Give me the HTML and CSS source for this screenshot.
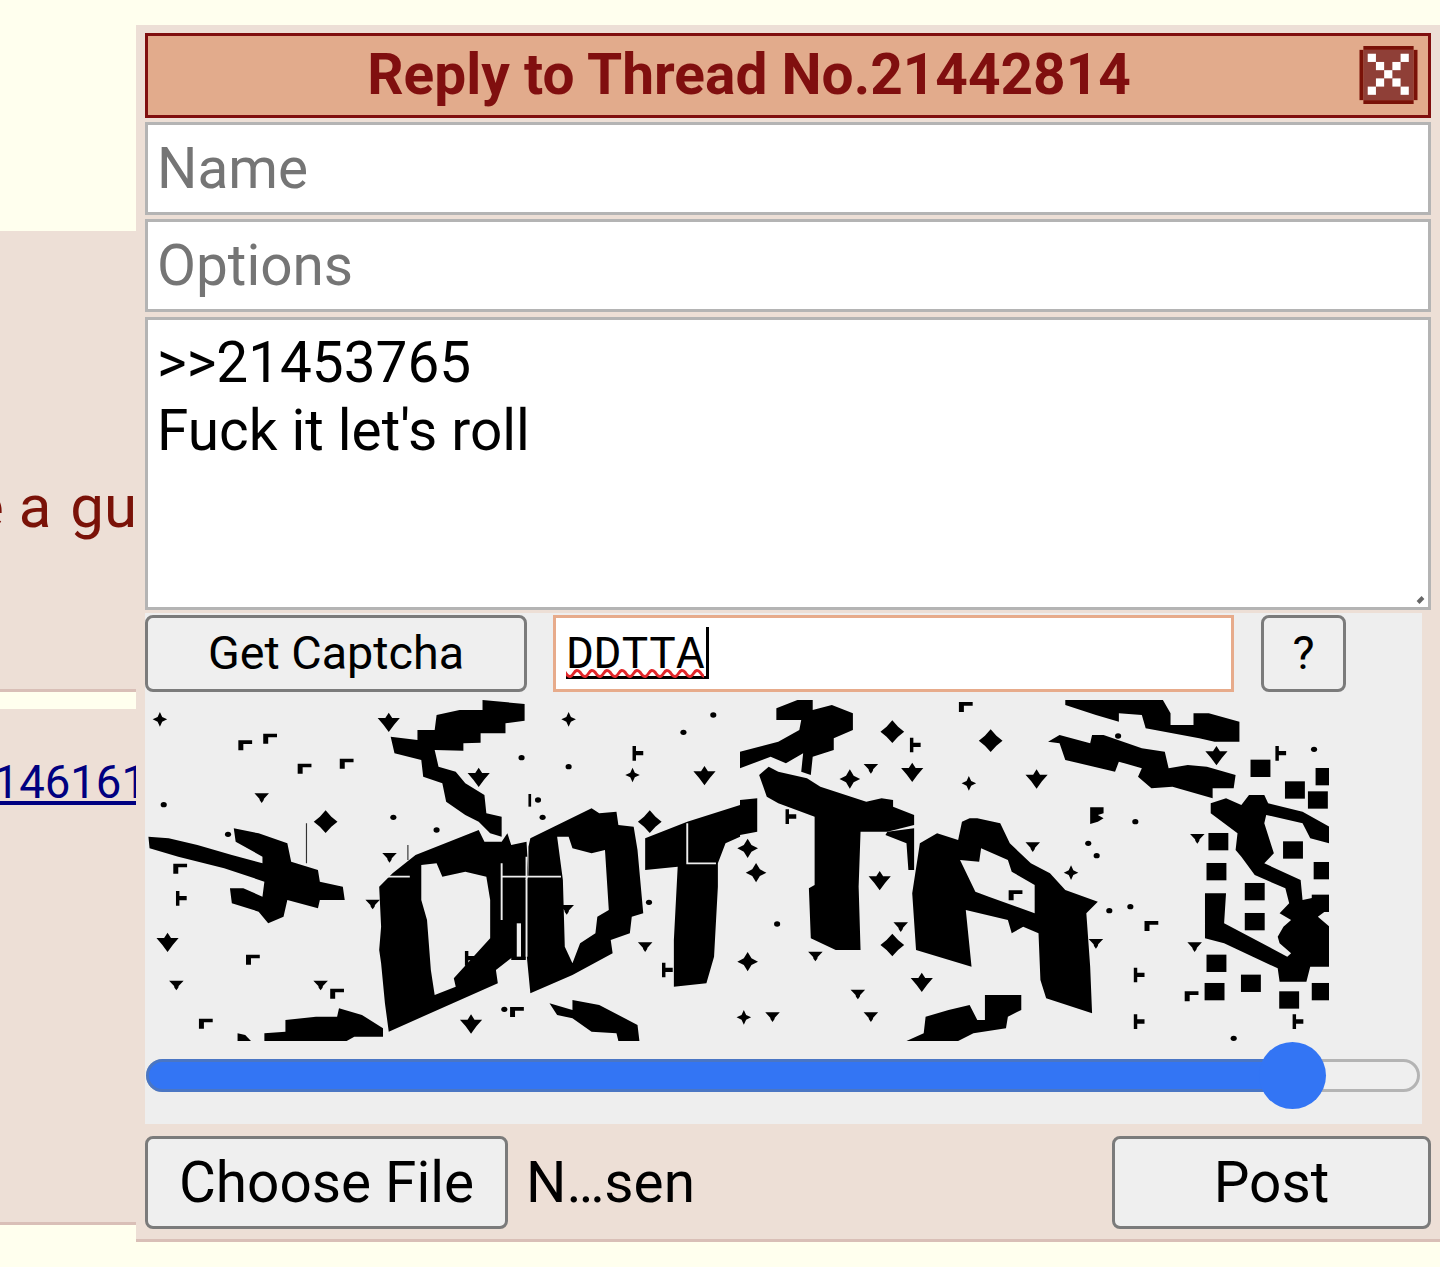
FILE: index.html
```html
<!DOCTYPE html>
<html>
<head>
    <meta charset="utf-8" />
    <title>Reply to Thread</title>
    <link rel="stylesheet" href="styles.css">
</head>
<body>
    <div class="posts">
        <div class="post post-first">
            <div class="post-text quote-text">e a <span class="quote-tail">guy</span></div>
        </div>
        <div class="post post-second">
            <a class="post-link" href="#">21461612</a>
        </div>
    </div>

    <form class="reply-panel">
        <div class="panel-title">
            <span>Reply to Thread No.21442814</span>
            <svg class="close-icon" viewBox="0 0 60 60" width="59" height="58">
                <rect x="4" y="4" width="52" height="52" fill="#8f3f37" />
                <rect x="4" y="0" width="52" height="4" fill="#7a1208" />
                <rect x="4" y="56" width="52" height="4" fill="#7a1208" />
                <rect x="0" y="4" width="4" height="52" fill="#7a1208" />
                <rect x="56" y="4" width="4" height="52" fill="#7a1208" />
                <g fill="#fff">
                    <rect x="8.5" y="8" width="8.5" height="8.5" />
                    <rect x="42.5" y="8" width="8.5" height="8.5" />
                    <rect x="17" y="16.5" width="8.5" height="8.5" />
                    <rect x="34" y="16.5" width="8.5" height="8.5" />
                    <rect x="25.5" y="25" width="8.5" height="8.5" />
                    <rect x="17" y="33.5" width="8.5" height="8.5" />
                    <rect x="34" y="33.5" width="8.5" height="8.5" />
                    <rect x="8.5" y="42" width="8.5" height="8.5" />
                    <rect x="42.5" y="42" width="8.5" height="8.5" />
                </g>
            </svg>
        </div>
        <input class="field" type="text" placeholder="Name" />
        <input class="field" type="text" placeholder="Options" />
        <div class="body-wrap">
            <textarea class="field field-body">&gt;&gt;21453765
Fuck it let's roll</textarea>
            <span class="grip"></span>
        </div>

        <div class="captcha-box">
            <div class="captcha-row">
                <button class="btn btn-captcha" type="button">Get Captcha</button>
                <div class="captcha-input"><span class="captcha-value">DDTTA</span></div>
                <button class="btn btn-help" type="button">?</button>
            </div>
            <svg class="captcha-img" viewBox="148 700 1181 341" width="1181" height="341">
                <defs>
                    <polygon id="d" points="0,-22 6,-7 19,0 6,7 0,22 -6,7 -19,0 -6,-7" />
                    <polygon id="m" points="0,-29 10,-10 27,0 10,10 0,29 -10,10 -27,0 -10,-10" />
                    <polygon id="b" points="0,-34 15,-15 31,0 15,15 0,34 -15,15 -31,0 -15,-15" />
                    <polygon id="h" points="-29,-11 -9,-11 0,-27 9,-11 29,-11 14,9 0,31 -14,9" />
                    <polygon id="t" points="-19,-13 19,-13 6,3 5,8 0,16 -5,8 -6,3" />
                    <polygon id="s" points="-11,-22 -2,-22 -2,-7 17,-7 17,6 -2,6 -2,22 -11,22" />
                    <polygon id="k" points="-18,-14 18,-14 18,-3 -5,-3 -5,16 -18,16" />
                    <circle id="o" r="8" />
                    <rect id="q" x="-26" y="-26" width="52" height="52" />
                </defs>
                <g transform="translate(140 700) scale(.3827 .3333)">
                    <polygon points="895,0 1005,12 1005,62 955,70 955,100 890,100 890,128 845,130 845,152 770,150 780,200 825,215 850,250 900,285 905,340 945,350 945,410 915,400 885,365 850,345 800,305 790,250 740,230 735,180 665,160 655,110 725,120 725,90 770,90 775,45 835,30 895,30" />
                    <polygon points="22,410 75,415 150,435 240,465 320,490 320,470 250,425 245,385 310,400 385,430 395,485 465,510 470,545 530,560 535,600 470,600 465,625 385,600 375,650 335,670 310,635 240,610 235,565 270,565 320,590 325,545 220,505 100,470 25,445" />
                    <path fill-rule="evenodd" d="M625 560 660 520 720 465 885 390 900 425 945 425 960 400 970 435 1010 425 1015 525 975 600 975 770 930 810 935 850 650 995 640 910 630 790 625 750 630 680Z M735 495 775 490 790 530 850 515 905 530 915 600 915 715 820 835 825 860 770 885 760 810 750 660 735 600Z" />
                    <path fill-rule="evenodd" d="M1020 415 1180 325 1200 340 1245 335 1250 375 1290 380 1300 450 1315 640 1285 650 1280 700 1230 720 1235 760 1130 825 1020 880 1015 820 1005 700 1005 560 1015 525 1015 440Z M1090 410 1120 410 1130 445 1180 460 1215 450 1225 630 1195 650 1190 700 1150 730 1130 790 1110 740 1105 540Z" />
                    <polygon points="970,540 1012,540 1012,670 1008,780 970,780" />
                    <polygon points="1320,415 1430,365 1568,315 1568,410 1530,430 1510,490 1510,560 1500,770 1480,850 1395,860 1395,720 1405,500 1320,510" />
                    <polygon points="325,1023 325,1000 380,995 380,960 460,950 515,950 520,925 580,945 635,985 635,1010 560,1010 540,1023" />
                    <polygon points="1070,910 1130,930 1130,900 1200,915 1300,975 1305,1023 1250,1023 1245,1000 1180,995 1130,955 1090,945" />
                    <polygon points="255,1000 275,1005 290,1023 255,1023" />
                    <g stroke="#eee" stroke-width="5" fill="none">
                        <path d="M945 530H1100M945 490V660M1010 470V770M1430 370V490H1505M635 530H705" />
                        <path d="M990 670V770" stroke-width="11" />
                    </g>
                    <path d="M435 370V490M700 435V480" stroke="#333" stroke-width="3" />
                    <use href="#d" x="52" y="58" /><use href="#d" x="1120" y="58" /><use href="#d" x="1287" y="225" />
                    <use href="#b" x="485" y="365" /><use href="#b" x="1332" y="365" />
                    <use href="#h" x="650" y="65" /><use href="#h" x="885" y="230" /><use href="#h" x="72" y="725" /><use href="#h" x="1475" y="225" /><use href="#h" x="865" y="970" />
                    <use href="#t" x="318" y="293" /><use href="#t" x="652" y="472" /><use href="#t" x="608" y="612" /><use href="#t" x="1320" y="740" /><use href="#t" x="95" y="855" /><use href="#t" x="472" y="855" /><use href="#t" x="1115" y="628" />
                    <use href="#s" x="1298" y="160" /><use href="#s" x="105" y="595" /><use href="#s" x="1375" y="810" /><use href="#s" x="860" y="775" />
                    <use href="#k" x="340" y="115" /><use href="#k" x="430" y="205" /><use href="#k" x="540" y="190" /><use href="#k" x="295" y="778" /><use href="#k" x="515" y="880" /><use href="#k" x="172" y="970" /><use href="#k" x="275" y="135" /><use href="#k" x="105" y="505" /><use href="#k" x="985" y="935" />
                    <use href="#o" x="1498" y="45" /><use href="#o" x="1420" y="97" /><use href="#o" x="997" y="173" /><use href="#o" x="1120" y="200" /><use href="#o" x="62" y="314" /><use href="#o" x="662" y="352" /><use href="#o" x="1052" y="352" /><use href="#o" x="775" y="390" /><use href="#o" x="230" y="403" /><use href="#o" x="1330" y="607" /><use href="#o" x="1040" y="300" /><use href="#o" x="952" y="928" />
                    <rect x="1015" y="282" width="7" height="38" />
                </g>
                <g transform="translate(740 700) scale(.3827 .3333)">
                    <polygon points="0,155 50,140 100,125 155,90 160,60 95,60 95,25 150,0 190,0 190,30 240,15 295,40 295,90 245,115 245,150 190,170 185,225 160,215 165,160 120,190 80,170 0,205" />
                    <polygon points="0,300 45,295 45,395 0,405" />
                    <polygon points="50,225 75,200 100,215 175,235 210,260 330,305 370,295 400,300 400,320 455,345 455,375 385,395 315,395 310,560 315,750 250,750 185,715 180,565 195,555 195,350 100,310 70,290" />
                    <polygon points="385,395 455,385 455,510 440,510 435,430 380,405" />
                    <path fill-rule="evenodd" d="M470 430 515 400 570 420 580 365 600 355 620 355 680 370 705 430 760 490 810 520 850 570 935 605 905 640 915 800 920 940 800 895 785 840 780 700 740 680 710 700 700 660 590 630 605 800 460 750 450 580Z M575 480 625 485 630 445 700 480 710 515 770 555 770 640 650 590 615 575Z" />
                    <polygon points="850,0 1105,0 1125,40 1125,75 1185,75 1185,40 1225,40 1305,65 1305,125 1240,125 1200,115 1060,85 1050,45 990,40 990,65 930,45 850,15" />
                    <polygon points="805,125 835,105 915,130 920,105 950,105 1050,145 1110,155 1120,205 1170,195 1220,200 1295,225 1290,265 1235,265 1235,295 1130,260 1075,265 1040,230 1050,205 990,185 980,215 850,180 835,130" />
                    <polygon points="1230,310 1270,295 1310,315 1330,285 1370,285 1380,310 1470,335 1540,380 1540,430 1490,415 1470,370 1375,345 1370,370 1395,460 1370,490 1465,540 1470,600 1510,590 1540,590 1540,625 1510,650 1540,680 1540,800 1490,800 1480,845 1410,845 1405,805 1265,730 1215,715 1215,580 1270,580 1265,670 1430,770 1440,760 1410,730 1405,710 1420,680 1440,660 1410,640 1435,610 1425,565 1345,525 1310,470 1295,450 1300,400 1230,340" />
                    <polygon points="435,1023 480,1000 485,950 545,930 600,915 620,960 640,960 640,885 735,885 735,930 700,950 695,985 610,1000 570,1023" />
                    <polygon points="915,322 950,322 950,340 935,345 950,355 935,365 915,372" />
                    <use href="#b" x="398" y="95" /><use href="#b" x="655" y="122" /><use href="#b" x="398" y="735" />
                    <use href="#m" x="287" y="237" /><use href="#d" x="598" y="250" /><use href="#m" x="42" y="518" /><use href="#d" x="865" y="518" /><use href="#m" x="20" y="785" /><use href="#m" x="20" y="445" /><use href="#d" x="10" y="952" />
                    <use href="#h" x="450" y="215" /><use href="#h" x="775" y="235" /><use href="#h" x="1245" y="165" /><use href="#h" x="475" y="845" /><use href="#h" x="365" y="540" />
                    <use href="#t" x="342" y="205" /><use href="#t" x="197" y="768" /><use href="#t" x="420" y="680" /><use href="#t" x="308" y="882" /><use href="#t" x="85" y="950" /><use href="#t" x="342" y="950" /><use href="#t" x="1188" y="740" /><use href="#t" x="765" y="440" /><use href="#t" x="930" y="730" /><use href="#t" x="1195" y="415" />
                    <use href="#s" x="455" y="135" /><use href="#s" x="130" y="350" /><use href="#s" x="1410" y="160" /><use href="#s" x="1040" y="825" /><use href="#s" x="1040" y="965" /><use href="#s" x="1455" y="965" />
                    <use href="#k" x="590" y="20" /><use href="#k" x="720" y="585" /><use href="#k" x="1075" y="677" /><use href="#k" x="1180" y="888" />
                    <use href="#o" x="97" y="672" /><use href="#o" x="1033" y="365" /><use href="#o" x="910" y="430" /><use href="#o" x="932" y="467" /><use href="#o" x="965" y="632" /><use href="#o" x="1020" y="620" /><use href="#o" x="1500" y="148" /><use href="#o" x="1290" y="1015" /><use href="#o" x="988" y="108" />
                    <use href="#q" x="1450" y="270" /><use href="#q" x="1245" y="515" /><use href="#q" x="1240" y="875" /><use href="#q" x="1360" y="205" /><use href="#q" x="1530" y="230" /><use href="#q" x="1525" y="512" /><use href="#q" x="1445" y="450" /><use href="#q" x="1345" y="575" /><use href="#q" x="1345" y="665" /><use href="#q" x="1335" y="850" /><use href="#q" x="1245" y="790" /><use href="#q" x="1435" y="900" /><use href="#q" x="1520" y="875" /><use href="#q" x="1520" y="610" /><use href="#q" x="1250" y="425" /><use href="#q" x="1510" y="300" />
                </g>
            </svg>
            <div class="slider">
                <div class="slider-fill" style="width: 90%"></div>
                <div class="slider-thumb"></div>
            </div>
        </div>

        <div class="file-row">
            <button class="btn btn-file" type="button">Choose File</button>
            <span class="file-name">N…sen</span>
            <button class="btn btn-post" type="button">Post</button>
        </div>
    </form>
</body>
</html>
```

FILE: styles.css
```css
body {
    margin: 0;
    height: 1267px;
    overflow: hidden;
    background: #ffffee;
    font-family: Roboto, "Liberation Sans", sans-serif;
    color: #000;
}

.posts {
    padding-top: 231px;
}

.post {
    box-sizing: border-box;
    background: #eddfd6;
    border-bottom: 3px solid #d9bfb7;
    overflow: hidden;
    white-space: nowrap;
}

.post-first {
    height: 461px;
    padding-top: 236px;
    margin-bottom: 17px;
}

.post-second {
    height: 516px;
    padding-top: 42px;
}

.post-text {
    margin-left: -28px;
}

.quote-text {
    font-size: 60px;
    line-height: 80px;
    color: #7a1208;
}

.quote-tail {
    margin-left: 4px;
}

.post-link {
    display: block;
    margin-left: -32px;
    font-size: 45.5px;
    line-height: 64px;
    color: #000080;
}

.reply-panel {
    position: absolute;
    left: 136px;
    top: 25px;
    box-sizing: border-box;
    width: 1304px;
    height: 1217px;
    padding: 8px 9px 0;
    background: #eddfd6;
    border-bottom: 3px solid #d9bfb7;
    display: flex;
    flex-direction: column;
}

.panel-title {
    position: relative;
    box-sizing: border-box;
    height: 85px;
    margin-bottom: 4px;
    padding-right: 78px;
    background: #e2ab8c;
    border: 3px solid #800f0f;
    color: #800f0f;
    font-size: 56.8px;
    font-weight: 700;
    line-height: 78px;
    text-align: center;
}

.close-icon {
    position: absolute;
    right: 10px;
    top: 10px;
}

.field {
    display: block;
    box-sizing: border-box;
    width: 100%;
    height: 93px;
    margin: 0 0 4px;
    padding: 0 9px;
    border: 3px solid #b4b4b4;
    border-radius: 0;
    background: #fff;
    font-family: inherit;
    font-size: 56.7px;
    outline: none;
}

.field::placeholder {
    color: #757575;
}

.body-wrap {
    position: relative;
    margin: 1px 0 3px;
}

.field-body {
    height: 293px;
    margin: 0;
    padding-top: 9px;
    line-height: 68px;
    resize: none;
}

.grip {
    position: absolute;
    right: 7px;
    bottom: 8px;
    width: 7px;
    height: 4px;
    background: #666;
    transform: rotate(-45deg);
}

.captcha-box {
    box-sizing: border-box;
    width: 1277px;
    height: 511px;
    background: #eeeeee;
    padding-top: 2px;
}

.captcha-row {
    display: flex;
    height: 77px;
}

.btn {
    box-sizing: border-box;
    padding: 0;
    border: 3px solid #7b7b7b;
    border-radius: 8px;
    background: #efefef;
    color: #000;
    font-family: inherit;
}

.btn-captcha {
    width: 382px;
    padding-bottom: 2px;
    font-size: 46.7px;
}

.captcha-input {
    box-sizing: border-box;
    display: flex;
    align-items: flex-start;
    width: 681px;
    margin-left: 26px;
    padding: 9px 10px 0;
    border: 3px solid #e7ab8b;
    background: #fff;
    font-family: "Liberation Mono", monospace;
    font-size: 46px;
}

.captcha-value {
    height: 49px;
    padding-right: 2px;
    line-height: 58px;
    border-right: 3px solid #000;
    border-bottom: 3px solid #000;
    text-decoration: underline wavy #e3272b 3px;
    text-underline-offset: 1px;
}

.btn-help {
    width: 85px;
    margin-left: 27px;
    padding-bottom: 2px;
    font-size: 46.7px;
}

.captcha-img {
    display: block;
    margin: 8px 0 0 3px;
}

.slider {
    position: relative;
    box-sizing: border-box;
    width: 1274px;
    height: 33px;
    margin: 18px 0 0 1px;
    border: 3px solid #b4b4b4;
    border-radius: 17px;
    background: #efefef;
}

.slider-fill {
    position: absolute;
    left: -3px;
    top: -3px;
    height: 33px;
    box-sizing: border-box;
    border: 3px solid #4a76c4;
    border-radius: 17px 0 0 17px;
    background: #3375f4;
}

.slider-thumb {
    position: absolute;
    left: 1110px;
    top: -20px;
    width: 67px;
    height: 67px;
    border-radius: 50%;
    background: #3375f4;
}

.file-row {
    display: flex;
    align-items: center;
    height: 93px;
    margin-top: 12px;
}

.btn-file {
    width: 363px;
    height: 93px;
    font-size: 56.7px;
}

.file-name {
    margin-left: 18px;
    font-size: 56.7px;
}

.btn-post {
    width: 319px;
    height: 93px;
    margin-left: auto;
    font-size: 56.7px;
}
```
